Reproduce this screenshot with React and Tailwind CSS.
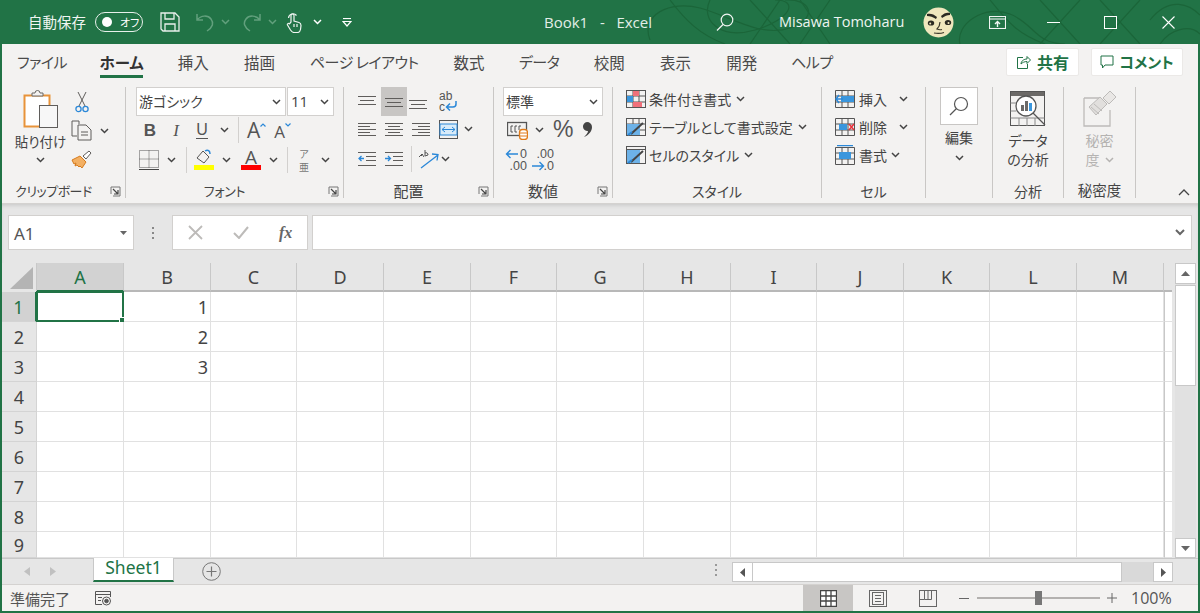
import React from 'react';

const JP = "font-['Noto_Sans_CJK_JP','Noto_Sans',sans-serif] [font-feature-settings:'palt']";
const gray = '#5f5d5b';
const blue = '#2b88d8';

function Chev({ color = '#444', className = '' }) {
  return (
    <svg width="9" height="6" viewBox="0 0 9 6" className={className}>
      <path d="M1 1l3.500 3.500L8 1" fill="none" stroke={color} strokeWidth="1.500" />
    </svg>
  );
}

function Launcher() {
  return (
    <svg width="11" height="11" viewBox="0 0 11 11">
      <path d="M1 8V1h9v9H3" fill="none" stroke="#777" strokeWidth="1" />
      <path d="M3 3l5 5M8 4v4H4" fill="none" stroke="#444" strokeWidth="1.200" />
    </svg>
  );
}

function Lines({ rows, w = 18, h = 14 }) {
  return (
    <svg width={w} height={h} viewBox={`0 0 ${w} ${h}`}>
      {rows.map(([x1, x2, y], i) => (
        <path key={i} d={`M${x1} ${y}.5H${x2}`} stroke={gray} strokeWidth="1" />
      ))}
    </svg>
  );
}

function Group({ className, label, labelClass = 'text-[14px]', launcher, children }) {
  return (
    <div className={`${className} shrink-0 border-r border-[#c9c7c5] my-[5px] flex flex-col`}>
      <div className="flex-1 min-h-0">{children}</div>
      <div className={`h-[15px] -mt-[6px] flex items-center relative mb-[0px] ${launcher ? 'pr-[20px]' : ''}`}>
        <span className={`flex-1 text-center whitespace-nowrap leading-none text-[#444] ${labelClass}`}>{label}</span>
        {launcher && <span className="absolute right-[4px] top-[3px] flex"><Launcher /></span>}
      </div>
    </div>
  );
}

function TitleSwirls() {
  return (
    <svg className="absolute left-[630px] top-0" width="570" height="44" viewBox="0 0 570 44">
      <g fill="none" stroke="#1b6539" strokeWidth="1.200">
        <path d="M20 40C10 15 40 0 70 8s60 30 90 20 20-30-5-28" />
        <path d="M40 0c15 20 30 35 55 44M80 0C70 20 90 40 125 30s45-30 20-30" />
        <path d="M120 0l40 44M150 0l-30 44M170 0l30 44M200 0l-30 44" />
        <path d="M330 44c-5-20 25-40 50-30s25 30 55 30M360 0c20 25 30 35 55 44" />
        <path d="M410 0l40 44M450 0l-40 44M470 0l40 44M510 0l-40 44M520 20c20-25 40-15 50-5M530 44c10-15 30-20 40-10" />
      </g>
    </svg>
  );
}

function TitleBar() {
  return (
    <div className="relative h-[44px] shrink-0 flex items-center text-white overflow-hidden">
      <TitleSwirls />
      <span className={`${JP} relative ml-[28px] w-[59px] whitespace-nowrap text-[14.500px] text-[#f0f5f2]`}>自動保存</span>
      <div className="relative ml-[8px] w-[48px] h-[20px] rounded-full border border-[#e8f0eb] flex items-center">
        <span className="ml-[6px] w-[10px] h-[10px] rounded-full bg-white" />
        <span className={`${JP} ml-[8px] text-[11px] leading-none`}>オフ</span>
      </div>
      <svg className="relative ml-[17px]" width="20" height="20" viewBox="0 0 20 20" fill="none" stroke="#e8f0eb" strokeWidth="1.300">
        <path d="M1 1h14l4 4v14H3l-2-2z" /><path d="M5 1v6h9V1M5 19v-7h10v7" />
      </svg>
      <svg className="relative ml-[15px]" width="20" height="20" viewBox="0 0 20 20" fill="none" stroke="#62a07d" strokeWidth="1.500">
        <path d="M2 2v6h6M2 8c4-5 11-5 14-1s2 8-4 12" />
      </svg>
      <Chev color="#62a07d" className="relative ml-[6px]" />
      <svg className="relative ml-[12px]" width="20" height="20" viewBox="0 0 20 20" fill="none" stroke="#62a07d" strokeWidth="1.500">
        <path d="M18 2v6h-6M18 8c-4-5-11-5-14-1s-2 8 4 12" />
      </svg>
      <Chev color="#62a07d" className="relative ml-[6px]" />
      <svg className="relative ml-[9px]" width="16" height="21" viewBox="0 0 16 21" fill="none" stroke="#f0f5f2" strokeWidth="1.200">
        <path d="M5 10V3.500a1.500 1.500 0 013 0V9l5 1.500c1.500.5 2 1.500 2 3l-.5 4c-.3 1.500-1.500 3-3 3H8c-1.500 0-2.500-1-3.500-2.500L1.500 13c-.5-1 .8-2.200 2-1.200z" />
        <path d="M2.500 6a4.500 4.500 0 018-2.500M8 12v3M11 12v3" />
      </svg>
      <Chev color="#fff" className="relative ml-[11px]" />
      <svg className="relative ml-[20px]" width="10" height="9" viewBox="0 0 10 9"><path d="M1 .500h8" stroke="#fff" strokeWidth="1.200" /><path d="M1 3.500h8L5 8z" fill="none" stroke="#fff" strokeWidth="1.200" /></svg>
      <span className="relative ml-[192px] w-[110px] whitespace-pre font-['Open_Sans',sans-serif] text-[15px] text-[#e3eee8]">Book1   -   Excel</span>
      <svg className="relative ml-[62px]" width="18" height="18" viewBox="0 0 18 18" fill="none" stroke="#f0f5f2" strokeWidth="1.200">
        <circle cx="11" cy="7" r="5.800" /><path d="M7 11.500L1 17.500" />
      </svg>
      <span className="relative ml-[45px] w-[131px] whitespace-nowrap font-['Open_Sans',sans-serif] text-[14.500px] text-[#eef5f1]">Misawa Tomoharu</span>
      <svg className="relative ml-[13px]" width="31" height="31" viewBox="0 0 31 31">
        <circle cx="15.500" cy="15.500" r="15" fill="#efe7bd" />
        <path d="M4 7c3-1 7 0 10 3l-1 2c-3-2-6-3-9-3zM27 6c-3-1-6 0-9 3l1 2c3-2 5-3 8-3z" fill="#2b2a22" />
        <ellipse cx="8" cy="16" rx="3.200" ry="2.600" fill="#2b2a22" /><ellipse cx="25" cy="15.500" rx="3.200" ry="2.600" fill="#2b2a22" />
        <circle cx="7.200" cy="16.500" r="1" fill="#efe7bd" /><circle cx="25.500" cy="16" r="1" fill="#efe7bd" />
        <path d="M17 15c0 3-1 5-3 7 2 1 3 1 5 .5M11 26c3 .5 7 .5 10-.5" fill="none" stroke="#3b382a" strokeWidth="1.200" />
      </svg>
      <svg className="relative ml-[35px]" width="17" height="13" viewBox="0 0 17 13" fill="none" stroke="#f0f5f2" strokeWidth="1.100">
        <rect x=".5" y=".5" width="16" height="12" /><path d="M.5 3h16" /><path d="M8.500 11V5.500M6 8l2.500-2.500L11 8" strokeWidth="1.400" />
      </svg>
      <span className="relative ml-[41px] w-[13px] h-px bg-white" />
      <span className="relative ml-[44px] w-[13px] h-[13px] border border-white" />
      <svg className="relative ml-[45px]" width="13" height="13" viewBox="0 0 13 13"><path d="M.5.500l12 12M12.500.500l-12 12" stroke="#fff" strokeWidth="1.100" /></svg>
    </div>
  );
}

const kana = 'text-[15px] tracking-[-0.5px]';
const tabs = [
  ['ファイル', 'w-[48px]', kana], ['ホーム', 'w-[43px]', 'font-bold text-[#333]'], ['挿入', 'w-[32px]', ''], ['描画', 'w-[32px]', ''],
  ['ページ レイアウト', 'w-[109px]', kana], ['数式', 'w-[32px]', ''], ['データ', 'w-[40px]', kana], ['校閲', 'w-[32px]', ''],
  ['表示', 'w-[32px]', ''], ['開発', 'w-[32px]', ''], ['ヘルプ', 'w-[40px]', kana],
];

function TabRow() {
  return (
    <div className="h-[38px] shrink-0 flex items-start pl-[16px] pr-[15px] pt-[4px]">
      <div className="flex gap-[34.200px] text-[15.500px] text-[#4a4a4a]">
        {tabs.map(([t, w, cls]) => (
          <div key={t} className={`${w} flex flex-col items-center`}>
            <span className={`whitespace-nowrap leading-[28px] ${cls}`}>{t}</span>
            {t === 'ホーム' && <span className="w-full h-[3px] -mt-[1px] bg-[#217346]" />}
          </div>
        ))}
      </div>
      <div className="ml-auto flex gap-[12px]">
        <div className="w-[73px] h-[28px] bg-white rounded-[2px] border border-[#ebe9e7] flex items-center justify-center gap-[6px] text-[16px] font-bold text-[#217346]">
          <svg width="15" height="14" viewBox="0 0 15 14" fill="none" stroke="#217346" strokeWidth="1"><path d="M7 2.500H1.500v11h10V9" /><path d="M5 9c0-3 3-5 6-5V1.500L14.500 5 11 8.500V6.500c-2.500 0-4.500 1-6 2.500z" /></svg>
          <span>共有</span>
        </div>
        <div className="w-[92px] h-[28px] bg-white rounded-[2px] border border-[#ebe9e7] flex items-center justify-center gap-[5px] text-[15px] font-bold text-[#217346]">
          <svg width="14" height="14" viewBox="0 0 14 14" fill="none" stroke="#217346" strokeWidth="1"><path d="M1 1h12v9H5l-2.500 3v-3H1z" /></svg>
          <span>コメント</span>
        </div>
      </div>
    </div>
  );
}

function Clipboard() {
  return (
    <div className="h-full flex pl-[11px]">
      <div className="w-[55px] flex flex-col items-center">
        <svg className="mt-[3px]" width="36" height="39" viewBox="0 0 36 39">
          <rect x="1.500" y="5.500" width="25" height="31" fill="#fff" stroke="#e8933a" strokeWidth="2" />
          <path d="M9 6V3h3a2.500 2.500 0 015 0h3v3z" fill="#f3f2f1" stroke="#6b6967" />
          <rect x="16.500" y="15.500" width="18" height="22" fill="#f7f7f7" stroke="#5f5d5b" />
        </svg>
        <span className="mt-[2px] text-[13.500px] leading-[20px] whitespace-nowrap text-[#444]">貼り付け</span>
        <Chev className="mt-[6px]" />
      </div>
      <div className="ml-[3px] flex flex-col">
        <svg className="ml-[4px] mt-[5px]" width="14" height="21" viewBox="0 0 14 21" fill="none" stroke={gray}>
          <path d="M3 0l7 14M11 0L4 14" /><circle cx="3.500" cy="17" r="2.600" stroke={blue} strokeWidth="1.300" /><circle cx="10.500" cy="17" r="2.600" stroke={blue} strokeWidth="1.300" />
        </svg>
        <div className="mt-[7px] flex items-center">
          <svg width="21" height="21" viewBox="0 0 21 21" fill="none" stroke={gray}>
            <path d="M8 4V1H1v15h5" /><path d="M7 5h8l5 5v10H7z" /><path d="M10 12h7M10 15h7" />
          </svg>
          <Chev className="ml-[8px]" />
        </div>
        <svg className="mt-[9px]" width="21" height="19" viewBox="0 0 21 19">
          <path d="M1 10l8-4 6 6-4 6-2-2-1 1-2-2-2 1 1-3-2 1z" fill="#f3b063" stroke="#d67b1d" />
          <path d="M12 6l6-5 2 2-5 6z" fill="#fff" stroke={gray} />
        </svg>
      </div>
    </div>
  );
}

function Select({ className, text, textClass = 'text-[14px]' }) {
  return (
    <div className={`${className} h-[29px] bg-white border border-[#d2d0ce] flex items-center pl-[2px] pr-[4px]`}>
      <span className={`${textClass} text-[#444] whitespace-nowrap`}>{text}</span>
      <Chev className="ml-auto" />
    </div>
  );
}

function FontGroup() {
  return (
    <div className="h-full pl-[10px] flex flex-col">
      <div className="flex gap-px">
        <Select className="w-[150px]" text="游ゴシック" />
        <Select className="w-[47px]" text="11" textClass="text-[15px] pl-[1px] font-['Open_Sans',sans-serif]" />
      </div>
      <div className="flex items-center h-[26px] mt-[1px] text-[#555]">
        <span className="w-[26px] text-center text-[17px] font-bold leading-none ml-[1px] font-['Liberation_Sans',sans-serif]">B</span>
        <span className="w-[26px] text-center text-[17px] italic leading-none font-['Liberation_Serif',serif]">I</span>
        <span className="w-[26px] flex flex-col items-center"><span className="text-[16px] leading-[16px] font-['Liberation_Sans',sans-serif]">U</span><span className="w-[12px] h-px bg-[#555]" /></span>
        <Chev className="ml-[5px]" />
        <span className="ml-[9px] w-px h-[26px] bg-[#d2d0ce]" />
        <span className="ml-[8px] text-[21px] leading-none font-['Open_Sans',sans-serif] text-[#555]">A</span>
        <svg className="mb-[10px]" width="6" height="4" viewBox="0 0 6 4"><path d="M.5 3.500L3 1l2.500 2.500" fill="none" stroke={blue} strokeWidth="1.200" /></svg>
        <span className="ml-[8px] mt-[3px] text-[17px] leading-none font-['Open_Sans',sans-serif] text-[#555]">A</span>
        <svg className="mb-[10px]" width="6" height="4" viewBox="0 0 6 4"><path d="M.5.500L3 3 5.500.500" fill="none" stroke={blue} strokeWidth="1.200" /></svg>
      </div>
      <div className="flex items-center h-[27px] mt-[3px]">
        <svg className="ml-[3px]" width="20" height="20" viewBox="0 0 20 20" fill="none" stroke="#555" strokeDasharray="1 1">
          <path d="M.5.500h19v17H.5zM10 .5v17M.5 9h19" /><path d="M0 19.500h20" stroke="#444" strokeDasharray="none" />
        </svg>
        <Chev className="ml-[8px]" />
        <span className="ml-[10px] w-px h-[26px] bg-[#d2d0ce]" />
        <div className="ml-[7px] flex flex-col items-center">
          <svg width="20" height="16" viewBox="0 0 20 16" fill="none"><path d="M3 9l6-7 6 6-5 6z" stroke="#555" /><path d="M11 2c3-2 5 0 5 3" stroke={blue} strokeWidth="1.500" /></svg>
          <span className="w-[20px] h-[5px] bg-[#ffff00]" />
        </div>
        <Chev className="ml-[8px]" />
        <div className="ml-[10px] flex flex-col items-center">
          <span className="h-[16px] text-[19px] leading-[16px] font-['Open_Sans',sans-serif] text-[#555]">A</span>
          <span className="w-[20px] h-[5px] bg-[#ff0000]" />
        </div>
        <Chev className="ml-[8px]" />
        <span className="ml-[9px] w-px h-[26px] bg-[#d2d0ce]" />
        <div className="ml-[11px] w-[10px] flex flex-col items-center gap-[2px] text-[10px] text-[#777]"><span className="h-[11px] leading-[11px]">ア</span><span className="h-[11px] leading-[11px]">亜</span></div>
        <Chev className="ml-[12px]" />
      </div>
    </div>
  );
}

function Alignment() {
  const top = [[0, 18, 1], [2, 16, 5], [0, 18, 9]];
  const mid = [[0, 18, 3], [2, 16, 7], [0, 18, 11]];
  const bot = [[0, 18, 5], [2, 16, 9], [0, 18, 13]];
  const left = [[0, 18, 1], [0, 12, 4], [0, 18, 7], [0, 12, 10], [0, 18, 13]];
  const ctr = [[0, 18, 1], [3, 15, 4], [0, 18, 7], [3, 15, 10], [0, 18, 13]];
  const rgt = [[0, 18, 1], [6, 18, 4], [0, 18, 7], [6, 18, 10], [0, 18, 13]];
  return (
    <div className="h-full pl-[14px] flex flex-col">
      <div className="flex items-center h-[29px]">
        <span className="w-[18px] flex"><Lines rows={top} /></span>
        <span className="ml-[5px] w-[26px] h-[29px] bg-[#c8c6c4] flex items-center justify-center"><Lines rows={mid} /></span>
        <span className="ml-[2px] w-[18px] flex"><Lines rows={bot} /></span>
        <div className="ml-[12px] relative w-[18px] h-[22px] text-[12px] leading-[11px] text-[#555] font-['Liberation_Sans',sans-serif]">ab<br />c
          <svg className="absolute left-[6px] top-[9px]" width="13" height="11" viewBox="0 0 13 11" fill="none" stroke={blue} strokeWidth="1.500"><path d="M11 1v3c0 2-1 3-3 3H2M5 3.500L1.500 7 5 10.500" /></svg>
        </div>
      </div>
      <div className="flex items-center h-[26px]">
        <span className="w-[18px] flex"><Lines rows={left} /></span>
        <span className="ml-[9px] w-[18px] flex"><Lines rows={ctr} /></span>
        <span className="ml-[9px] w-[18px] flex"><Lines rows={rgt} /></span>
        <svg className="ml-[9px]" width="19" height="19" viewBox="0 0 19 19" fill="none">
          <rect x=".5" y=".5" width="18" height="18" stroke="#555" /><rect x="1" y="4" width="17" height="11" fill="#d8ebf9" stroke={blue} /><path d="M3 9.500h13M6 7L3 9.500 6 12M13 7l3 2.500L13 12" stroke={blue} />
        </svg>
        <Chev className="ml-[6px]" />
      </div>
      <div className="flex items-center h-[28px] mt-[3px]">
        <svg width="18" height="16" viewBox="0 0 18 16" fill="none"><path d="M0 1.500h18M8 5.500h10M8 9.500h10M0 14.500h18" stroke={gray} /><path d="M6 7.500H1M3.500 5L1 7.500 3.500 10" stroke={blue} strokeWidth="1.300" /></svg>
        <svg className="ml-[9px]" width="18" height="16" viewBox="0 0 18 16" fill="none"><path d="M0 1.500h18M8 5.500h10M8 9.500h10M0 14.500h18" stroke={gray} /><path d="M0 7.500h5M3 5l2.500 2.500L3 10" stroke={blue} strokeWidth="1.300" /></svg>
        <span className="ml-[8px] w-px h-[26px] bg-[#d2d0ce]" />
        <svg className="ml-[6px]" width="21" height="20" viewBox="0 0 21 20" fill="none"><path d="M3 19L20 6M14 5l6 .5-1 6" stroke={blue} strokeWidth="1.300" /><path d="M1 8l3-3 2 3M3 7l2-2M7 1v6l3-1a2 2 0 00-3-2" stroke="#555" /></svg>
        <Chev className="ml-[2px]" />
      </div>
    </div>
  );
}

function NumberGroup() {
  return (
    <div className="h-full pl-[9px] flex flex-col">
      <Select className="w-[100px]" text="標準" />
      <div className="flex items-center h-[27px]">
        <svg className="ml-[4px]" width="21" height="20" viewBox="0 0 21 20" fill="none">
          <rect x=".5" y="2.500" width="19" height="13" stroke="#555" strokeWidth="1.300" /><path d="M6 6H4v6h2M10 6H8v6h2M14 6h-2v4" stroke="#555" />
          <rect x="12.500" y="9.500" width="8" height="10" rx="3" fill="#fff" stroke="#e07b1a" strokeWidth="1.300" /><path d="M13 13h7M13 16h7" stroke="#e07b1a" />
        </svg>
        <Chev className="ml-[7px]" />
        <span className="ml-[9px] text-[23px] leading-none font-['Liberation_Sans',sans-serif] text-[#555]">%</span>
        <svg className="ml-[9px]" width="11" height="15" viewBox="0 0 11 15"><path d="M5 0a5 5 0 015 5c0 4-3 8-8 10 2-2 4-4 4-6a4.500 4.500 0 01-1-9z" fill="#444" /></svg>
      </div>
      <div className="flex items-center h-[30px] mt-[2px] text-[#555] font-['Liberation_Sans',sans-serif]">
        <div className="relative ml-[2px] w-[22px] h-[24px] text-[12.500px] leading-[12px] text-right">0<br />.00
          <svg className="absolute left-0 top-[1px]" width="13" height="10" viewBox="0 0 13 10" fill="none" stroke={blue} strokeWidth="1.400"><path d="M13 5H1.500M5.500 1L1.500 5l4 4" /></svg>
        </div>
        <div className="relative ml-[5px] w-[22px] h-[24px] text-[12.500px] leading-[12px] text-right">.00<br />.0
          <svg className="absolute left-0 top-[13px]" width="13" height="10" viewBox="0 0 13 10" fill="none" stroke={blue} strokeWidth="1.400"><path d="M0 5h11.500M7.500 1l4 4-4 4" /></svg>
        </div>
      </div>
    </div>
  );
}

function StyleRow({ icon, text }) {
  return (
    <div className="flex items-center h-[28px] text-[#444]">
      {icon}
      <span className="ml-[3px] text-[14px] whitespace-nowrap">{text}</span>
      <Chev className="ml-[5px]" />
    </div>
  );
}

function Styles() {
  const grid = (
    <g fill="none" stroke="#555"><rect x=".5" y=".5" width="19" height="17" /><path d="M.5 6h19M.5 12h19M7 .5v17M13 .5v17" /></g>
  );
  return (
    <div className="h-full pl-[13px] -mt-[2px] flex flex-col">
      <StyleRow text="条件付き書式" icon={
        <svg width="20" height="18" viewBox="0 0 20 18">{grid}<rect x="7" y="1" width="6" height="5" fill="#f0707a" /><rect x="1" y="6" width="6" height="6" fill="#3a96dd" /><rect x="7" y="12" width="9" height="5" fill="#f0707a" /></svg>
      } />
      <StyleRow text="テーブルとして書式設定" icon={
        <svg width="20" height="18" viewBox="0 0 20 18">{grid}<rect x="1" y="6" width="13" height="11" fill="#6db2e8" /><path d="M5 16L17 5" stroke="#444" strokeWidth="2" /><path d="M2 17l4-3" stroke={blue} strokeWidth="2" /></svg>
      } />
      <StyleRow text="セルのスタイル" icon={
        <svg width="20" height="18" viewBox="0 0 20 18"><rect x=".5" y=".5" width="19" height="17" fill="none" stroke="#555" /><path d="M.5 3.500h19" stroke="#555" /><rect x="1" y="4" width="13" height="13" fill="#6db2e8" /><path d="M5 16L17 5" stroke="#444" strokeWidth="2" /><path d="M2 17l4-3" stroke={blue} strokeWidth="2" /></svg>
      } />
    </div>
  );
}

function CellRow({ icon, text, chevClass }) {
  return (
    <div className="flex items-center h-[28px]">
      {icon}
      <span className="ml-[4px] text-[14px] text-[#444] whitespace-nowrap">{text}</span>
      <Chev className={chevClass} />
    </div>
  );
}

function Cells() {
  const g = <path d="M.5.500h19v17H.5zM.5 6h19M.5 12h19M7 .5v17M13 .5v17" fill="none" stroke="#555" />;
  return (
    <div className="h-full pl-[13px] -mt-[2px] flex flex-col">
      <CellRow text="挿入" chevClass="ml-[12px]" icon={
        <svg width="20" height="18" viewBox="0 0 20 18">{g}<rect x="6" y="6" width="13" height="6" fill="#3a96dd" /><path d="M8 9H1M4 5L1 9l3 4" fill="none" stroke={blue} strokeWidth="1.500" /></svg>
      } />
      <CellRow text="削除" chevClass="ml-[12px]" icon={
        <svg width="20" height="18" viewBox="0 0 20 18">{g}<rect x="4" y="6" width="8" height="6" fill="#3a96dd" /><path d="M14 6l5 6M19 6l-5 6" stroke="#e8303a" strokeWidth="1.500" /></svg>
      } />
      <CellRow text="書式" chevClass="ml-[4px]" icon={
        <svg width="20" height="20" viewBox="0 0 20 20"><path d="M2 .500h16" stroke={blue} strokeWidth="1.500" /><path d="M.5 2.500h19v17H.5zM.5 8h19M.5 14h19M7 2.500v17M13 2.500v17" fill="none" stroke="#555" /><rect x="4" y="7" width="12" height="7" fill="#3a96dd" /></svg>
      } />
    </div>
  );
}

function EditGroup() {
  return (
    <div className="h-full flex flex-col items-center">
      <div className="w-[38px] h-[38px] bg-white border border-[#c8c6c4] flex items-center justify-center">
        <svg width="20" height="20" viewBox="0 0 20 20" fill="none" stroke="#555" strokeWidth="1.200"><circle cx="12" cy="8" r="6.500" /><path d="M7.500 12.500L1 19" /></svg>
      </div>
      <span className="mt-[2px] text-[14px] leading-[20px] text-[#444]">編集</span>
      <Chev className="mt-[8px]" />
    </div>
  );
}

function AnalysisGroup() {
  return (
    <div className="h-full flex flex-col items-center">
      <svg className="mt-[4px]" width="36" height="36" viewBox="0 0 36 36" fill="none">
        <rect x=".5" y=".5" width="34" height="34" stroke="#555" /><rect x="1" y="1" width="33" height="4" fill="#6b6967" />
        <path d="M.5 12h8M.5 20h6M.5 27h34M9 27v8M17 27v8M25 27v8" stroke="#888" />
        <circle cx="16" cy="15" r="10" fill="#fff" stroke="#555" strokeWidth="1.300" />
        <rect x="11" y="14" width="3" height="6" fill="#6b6967" /><rect x="15" y="10" width="3" height="10" fill="#6b6967" /><rect x="19" y="12" width="3" height="8" fill="#3a96dd" />
        <path d="M23 22l12 12" stroke="#555" strokeWidth="1.300" />
      </svg>
      <span className="mt-[4px] text-[14px] leading-[19px] text-[#444]">データ</span>
      <span className="text-[14px] leading-[19px] text-[#444]">の分析</span>
    </div>
  );
}

function SensGroup() {
  return (
    <div className="h-full flex flex-col items-center">
      <svg className="mt-[3px]" width="34" height="37" viewBox="0 0 34 37" fill="none" stroke="#bdbbb9">
        <path d="M1 8h17M1 8v28h26V20" strokeWidth="1.300" />
        <path d="M6 17L17 7l7 7-11 11z" fill="#e1dfdd" />
        <path d="M8 17l8 7M11 14l8 7" />
        <path d="M20 8l7-7 6 6-7 7z" fill="#e9e7e5" />
      </svg>
      <span className="mt-[4px] text-[14px] leading-[19px] text-[#b5b3b1]">秘密</span>
      <span className="flex items-center text-[14px] leading-[19px] text-[#b5b3b1]">度<Chev color="#b5b3b1" className="ml-[5px]" /></span>
    </div>
  );
}

function Ribbon() {
  return (
    <div className="h-[121px] shrink-0 flex relative">
      <Group className="w-[124px]" label="クリップボード" labelClass="text-[13px] tracking-[-0.5px]" launcher><Clipboard /></Group>
      <Group className="w-[218px]" label="フォント" labelClass="text-[13px] tracking-[-0.3px]" launcher><FontGroup /></Group>
      <Group className="w-[150px]" label="配置" labelClass="text-[15px]" launcher><Alignment /></Group>
      <Group className="w-[119px]" label="数値" labelClass="text-[15px]" launcher><NumberGroup /></Group>
      <Group className="w-[209px]" label="スタイル"><Styles /></Group>
      <Group className="w-[104px]" label="セル"><Cells /></Group>
      <Group className="w-[67px]" label=""><EditGroup /></Group>
      <Group className="w-[71px]" label="分析"><AnalysisGroup /></Group>
      <Group className="w-[72px]" label="秘密度" labelClass="text-[14.500px]"><SensGroup /></Group>
      <div className="flex-1 flex items-end justify-end pr-[8px] pb-[7px]">
        <svg width="12" height="7" viewBox="0 0 12 7"><path d="M1 6l5-5 5 5" fill="none" stroke="#444" strokeWidth="1.300" /></svg>
      </div>
    </div>
  );
}

function FormulaBar() {
  return (
    <div className="h-[60px] shrink-0 bg-[#e6e6e6] border-t border-[#d4d2d0] flex items-start pt-[11px] pl-[6px] pr-[6px] shadow-[inset_0_3px_4px_-2px_rgba(0,0,0,0.15)]">
      <div className="w-[126px] h-[35px] bg-white border border-[#d2d0ce] flex items-center pl-[5px] pr-[6px]">
        <span className="mt-[3px] text-[17px] text-[#555] font-['Noto_Sans',sans-serif]">A1</span>
        <svg className="ml-auto" width="7" height="4" viewBox="0 0 7 4"><path d="M0 0h7L3.500 4z" fill="#666" /></svg>
      </div>
      <div className="w-[38px] h-[35px] flex flex-col items-center justify-center gap-[3px]">
        <span className="w-[2px] h-[2px] bg-[#888]" /><span className="w-[2px] h-[2px] bg-[#888]" /><span className="w-[2px] h-[2px] bg-[#888]" />
      </div>
      <div className="w-[136px] h-[35px] bg-white border border-[#d2d0ce] flex items-center pl-[15px]">
        <svg width="15" height="15" viewBox="0 0 15 15"><path d="M1 1l13 13M14 1L1 14" stroke="#bdbbb9" strokeWidth="1.800" /></svg>
        <svg className="ml-[30px]" width="16" height="13" viewBox="0 0 16 13"><path d="M1 7l5 5 9-11" fill="none" stroke="#bdbbb9" strokeWidth="2" /></svg>
        <span className="ml-[30px] text-[16px] italic font-bold leading-none text-[#666] font-['Liberation_Serif',serif]">fx</span>
      </div>
      <div className="ml-[4px] flex-1 h-[35px] bg-white border border-[#d2d0ce] flex items-center justify-end pr-[6px]">
        <svg width="10" height="7" viewBox="0 0 10 7"><path d="M1 1l4 4 4-4" fill="none" stroke="#666" strokeWidth="2" /></svg>
      </div>
    </div>
  );
}

const cols = ['A', 'B', 'C', 'D', 'E', 'F', 'G', 'H', 'I', 'J', 'K', 'L', 'M', ''];
const vals = { 1: '1', 2: '2', 3: '3' };

function SheetGrid() {
  const rows = [1, 2, 3, 4, 5, 6, 7, 8, 9];
  return (
    <div className="w-[1170px] overflow-hidden grid grid-cols-[35px_87px_87px_86px_87px_87px_86px_87px_87px_86px_87px_86px_87px_87px_8px] grid-rows-[29px_repeat(8,30px)_26px] font-['Noto_Sans',sans-serif] text-[18px] leading-none text-[#444]">
      <div className="bg-[#e6e6e6] border-r border-[#c8c8c8] flex items-end justify-end pr-[3px] pb-[3px]">
        <svg width="23" height="22" viewBox="0 0 23 22"><path d="M23 0v22H0z" fill="#b4b4b4" /></svg>
      </div>
      {cols.map((c, i) => (
        <div key={i} className={`flex items-center justify-center border-b-2 ${c === 'A' ? 'bg-[#d2d2d2] text-[#217346] border-[#217346]' : 'bg-[#e6e6e6] border-[#b8b8b8]'} ${c ? 'border-r border-r-[#c8c8c8]' : ''}`}>{c}</div>
      ))}
      {rows.map(r => (
        <React.Fragment key={r}>
          <div className={`flex items-center justify-center border-r border-b border-[#d4d4d4] ${r === 1 ? 'bg-[#d2d2d2] text-[#217346] border-r-2 border-r-[#217346]' : 'bg-[#e6e6e6]'}`}>{r}</div>
          {cols.map((c, i) => (
            <div key={i} className={`relative bg-white border-b border-[#e1e1e1] flex items-center justify-end pr-[2px] ${c ? 'border-r' : 'border-l border-l-[#c8c8c8]'}`}>
              {c === 'B' ? vals[r] : ''}
              {c === 'A' && r === 1 && (
                <div className="absolute left-[-1px] top-[-1px] w-[88px] h-[31px] border-2 border-[#217346]">
                  <span className="absolute right-[-4px] bottom-[-4px] w-[5px] h-[5px] bg-[#217346] border border-white box-content" />
                </div>
              )}
            </div>
          ))}
        </React.Fragment>
      ))}
    </div>
  );
}

function VScroll() {
  return (
    <div className="ml-[3px] w-[21px] bg-[#e1e1e1] flex flex-col">
      <div className="h-[21px] bg-white border border-[#c8c8c8] flex items-center justify-center">
        <svg width="9" height="5" viewBox="0 0 9 5"><path d="M0 5h9L4.500 0z" fill="#666" /></svg>
      </div>
      <div className="h-[101px] mt-px bg-white border border-[#c8c8c8]" />
      <div className="h-[20px] mt-auto bg-white border border-[#c8c8c8] flex items-center justify-center">
        <svg width="9" height="5" viewBox="0 0 9 5"><path d="M0 0h9L4.500 5z" fill="#666" /></svg>
      </div>
    </div>
  );
}

function SheetTabs() {
  return (
    <div className="h-[26px] shrink-0 bg-[#e6e6e6] border-t border-[#c8c8c8] flex items-start">
      <svg className="ml-[22px] mt-[8px]" width="6" height="9" viewBox="0 0 6 9"><path d="M6 0v9L0 4.500z" fill="#c0c0c0" /></svg>
      <svg className="ml-[20px] mt-[8px]" width="6" height="9" viewBox="0 0 6 9"><path d="M0 0v9l6-4.500z" fill="#c0c0c0" /></svg>
      <div className="ml-[37px] -mt-px w-[81px] h-[24px] pb-[3px] bg-white border-x border-[#c8c8c8] border-b-2 border-b-[#217346] flex items-center justify-center text-[17.500px] leading-none text-[#217346] font-['Noto_Sans',sans-serif]">Sheet1</div>
      <svg className="ml-[28px] mt-[3px]" width="19" height="19" viewBox="0 0 19 19" fill="none" stroke="#777"><circle cx="9.500" cy="9.500" r="8.800" /><path d="M9.500 4.500v10M4.500 9.500h10" strokeWidth="1.200" /></svg>
      <div className="ml-[494px] mt-[5px] flex flex-col gap-[3px]">
        <span className="w-[2px] h-[2px] bg-[#999]" /><span className="w-[2px] h-[2px] bg-[#999]" /><span className="w-[2px] h-[2px] bg-[#999]" />
      </div>
      <div className="ml-[15px] mt-[3px] h-[20px] w-[441px] flex bg-[#d9d9d9]">
        <div className="w-[21px] bg-white border border-[#c8c8c8] flex items-center justify-center"><svg width="5" height="9" viewBox="0 0 5 9"><path d="M5 0v9L0 4.500z" fill="#555" /></svg></div>
        <div className="w-[369px] bg-white border border-[#c8c8c8] border-l-0" />
        <div className="ml-auto w-[20px] bg-white border border-[#c8c8c8] flex items-center justify-center"><svg width="5" height="9" viewBox="0 0 5 9"><path d="M0 0v9l5-4.500z" fill="#555" /></svg></div>
      </div>
    </div>
  );
}

function StatusBar() {
  return (
    <div className="flex-1 bg-[#f3f2f1] border-t border-[#d4d2d0] flex items-stretch text-[#555]">
      <span className="ml-[8px] w-[60px] self-center text-[15px] leading-none whitespace-nowrap">準備完了</span>
      <svg className="ml-[24px] self-center" width="18" height="16" viewBox="0 0 18 16" fill="none" stroke="#555">
        <path d="M8 14.500H1.500v-13h15V7" /><path d="M1.500 4.500h15M4 7.500h4M4 10.500h3" /><circle cx="12.500" cy="11" r="4" /><circle cx="12.500" cy="11" r="1.800" fill="#555" />
      </svg>
      <div className="ml-[691px] w-[50px] bg-[#c8c6c4] flex items-center justify-center">
        <svg width="17" height="17" viewBox="0 0 17 17"><rect x=".5" y=".5" width="16" height="16" fill="#fff" /><path d="M.5.500h16v16H.5zM6 .5v16M11 .5v16M.5 6h16M.5 11h16" fill="none" stroke="#444" strokeWidth="1.300" /></svg>
      </div>
      <svg className="ml-[16px] self-center" width="18" height="17" viewBox="0 0 18 17" fill="none" stroke="#666"><rect x=".5" y=".5" width="17" height="16" /><rect x="3.500" y="2.500" width="11" height="12" /><path d="M6 5.500h6M6 8.500h6M6 11.500h6" /></svg>
      <svg className="ml-[32px] self-center" width="18" height="17" viewBox="0 0 18 17" fill="none" stroke="#666"><rect x=".5" y=".5" width="17" height="16" /><path d="M5.500 .5v9h7v-9M.5 9.500h5M9 .5v9" /></svg>
      <span className="ml-[22px] self-center w-[10px] h-px bg-[#666]" />
      <div className="ml-[8px] w-[123px] self-center relative h-[2px] bg-[#b3b1af]">
        <span className="absolute left-[58px] top-[-6px] w-[7px] h-[14px] bg-[#777]" />
      </div>
      <svg className="ml-[7px] self-center" width="10" height="10" viewBox="0 0 10 10"><path d="M5 0v10M0 5h10" stroke="#666" /></svg>
      <span className="ml-[14px] self-center text-[16px] leading-none font-['Open_Sans',sans-serif]">100%</span>
    </div>
  );
}

export default function App() {
  return (
    <div className={`${JP} w-[1200px] h-[613px] bg-[#217346] overflow-hidden flex flex-col`}>
      <TitleBar />
      <div className="flex-1 min-h-0 mx-[2px] mb-[2px] flex flex-col bg-[#f3f2f1]">
        <TabRow />
        <Ribbon />
        <FormulaBar />
        <div className="h-[295px] shrink-0 flex bg-[#e6e6e6]">
          <SheetGrid />
          <VScroll />
        </div>
        <SheetTabs />
        <StatusBar />
      </div>
    </div>
  );
}
